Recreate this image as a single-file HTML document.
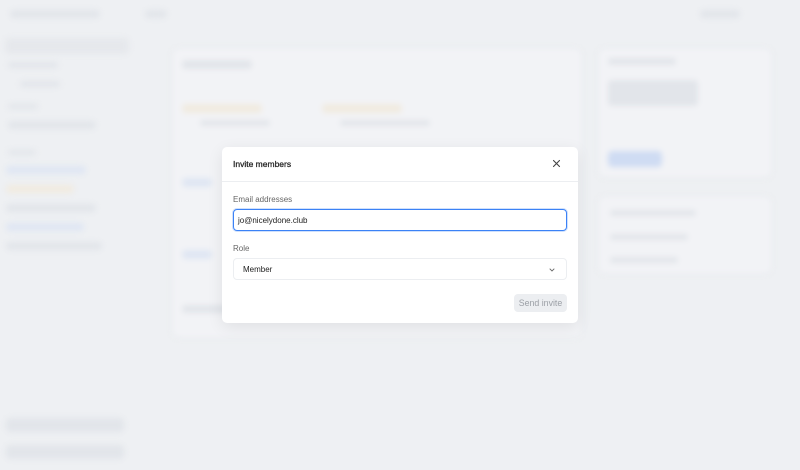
<!DOCTYPE html>
<html><head><meta charset="utf-8"><style>
*{box-sizing:border-box;margin:0;padding:0}
body{width:800px;height:470px;overflow:hidden;background:#eef0f3;font-family:"Liberation Sans",sans-serif;position:relative}
.bg{position:absolute;inset:0;filter:blur(3px)}
.b{position:absolute;background:#e2e5ea;border-radius:4px}
.card{position:absolute;background:#f2f3f6;border-radius:6px;border:1px solid #e6e8ec}
.modal{position:absolute;left:222px;top:147px;width:356px;height:176px;background:#fff;border-radius:5px;box-shadow:0 4px 16px rgba(0,0,0,.08)}
.hd{height:35px;border-bottom:1px solid #eceef1;display:flex;align-items:center;padding:0 11px;font-size:8.5px;color:#222;font-weight:normal;-webkit-text-stroke:0.25px #222}
.x{position:absolute;right:17px;top:12px}
.lbl{position:absolute;left:11px;font-size:8px;color:#666}
.in{position:absolute;left:11px;width:334px;height:22px;border-radius:4px;font-size:8px;color:#222;display:flex;align-items:center}
.btn{position:absolute;right:11px;top:147px;width:53px;height:18px;background:#eceef1;border-radius:4px;font-size:8.8px;color:#9ca0a6;display:flex;align-items:center;justify-content:center}
</style></head><body>
<div class="bg">
<div class="b" style="left:10px;top:10px;width:90px;height:8px"></div>
<div class="b" style="left:145px;top:10px;width:22px;height:8px"></div>
<div class="b" style="left:5px;top:38px;width:124px;height:16px;background:#e6e8ec"></div>
<div class="b" style="left:8px;top:62px;width:50px;height:6px"></div>
<div class="b" style="left:20px;top:81px;width:40px;height:6px"></div>
<div class="b" style="left:8px;top:104px;width:30px;height:5px"></div>
<div class="b" style="left:8px;top:121px;width:88px;height:8px"></div>
<div class="b" style="left:8px;top:150px;width:28px;height:5px"></div>
<div class="b" style="left:6px;top:166px;width:80px;height:8px;background:#dfe6f3"></div>
<div class="b" style="left:6px;top:185px;width:68px;height:8px;background:#f1ebe0"></div>
<div class="b" style="left:6px;top:204px;width:90px;height:8px"></div>
<div class="b" style="left:6px;top:223px;width:78px;height:8px;background:#dfe6f3"></div>
<div class="b" style="left:6px;top:242px;width:96px;height:8px"></div>
<div class="b" style="left:6px;top:418px;width:118px;height:14px"></div>
<div class="b" style="left:6px;top:445px;width:118px;height:14px"></div>
<div class="card" style="left:172px;top:48px;width:410px;height:290px"></div>
<div class="b" style="left:182px;top:60px;width:70px;height:9px"></div>
<div class="b" style="left:182px;top:104px;width:80px;height:9px;background:#f1ebe0"></div>
<div class="b" style="left:322px;top:104px;width:80px;height:9px;background:#f1ebe0"></div>
<div class="b" style="left:200px;top:120px;width:70px;height:6px"></div>
<div class="b" style="left:340px;top:120px;width:90px;height:6px"></div>
<div class="b" style="left:182px;top:178px;width:30px;height:9px;background:#dfe6f3"></div>
<div class="b" style="left:182px;top:250px;width:30px;height:9px;background:#dfe6f3"></div>
<div class="b" style="left:182px;top:305px;width:50px;height:8px"></div>
<div class="card" style="left:598px;top:48px;width:174px;height:130px"></div>
<div class="b" style="left:608px;top:58px;width:68px;height:7px"></div>
<div class="b" style="left:608px;top:80px;width:90px;height:26px"></div>
<div class="b" style="left:608px;top:151px;width:54px;height:16px;background:#cfdcf3"></div>
<div class="card" style="left:598px;top:196px;width:174px;height:78px"></div>
<div class="b" style="left:610px;top:210px;width:86px;height:6px"></div>
<div class="b" style="left:610px;top:234px;width:78px;height:6px"></div>
<div class="b" style="left:610px;top:257px;width:68px;height:6px"></div>
<div class="b" style="left:700px;top:10px;width:40px;height:8px"></div>
</div>
<div class="modal">
<div class="hd">Invite members</div>
<svg class="x" width="9" height="9" viewBox="0 0 9 9"><path d="M1.5 1.5l6 6M7.5 1.5l-6 6" stroke="#444" stroke-width="1.1" stroke-linecap="round"/></svg>
<div class="lbl" style="top:48px">Email addresses</div>
<div class="in" style="top:62px;border:1.5px solid #3b82f6;box-shadow:0 0 0 1px #cfe0fc;padding-left:4px">jo@nicelydone.club</div>
<div class="lbl" style="top:97px">Role</div>
<div class="in" style="top:111px;border:1px solid #eceef1;padding-left:9px">Member
<svg style="position:absolute;right:11px;top:9px" width="6" height="4" viewBox="0 0 6 4"><path d="M.7.7L3 3l2.3-2.3" stroke="#666" stroke-width=".9" fill="none"/></svg></div>
<div class="btn">Send invite</div>
</div>
</body></html>
